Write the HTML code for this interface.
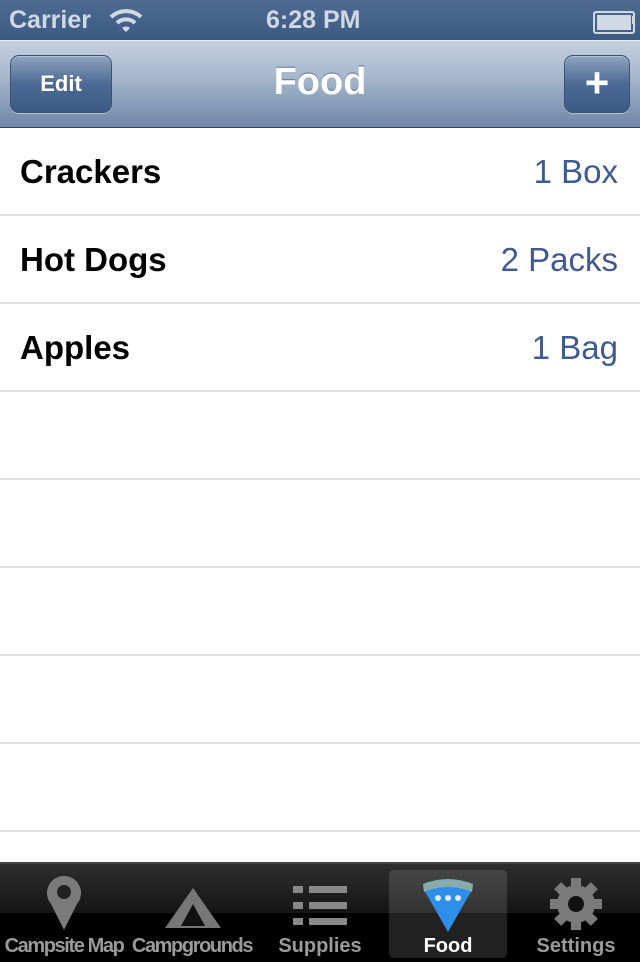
<!DOCTYPE html>
<html><head><style>
body{margin:0;width:640px;height:960px;overflow:hidden;font-family:"Liberation Sans",sans-serif;background:#fff;position:relative}
.sb{position:absolute;top:0;left:0;width:640px;height:40px;background:linear-gradient(#4f6b92,#3b5a82);color:#d0d8e4;font-weight:bold;font-size:25px}
.nav{position:absolute;top:40px;left:0;width:640px;height:88px;background:linear-gradient(#c3d0df,#a8b8cd 40%,#6d87a8 100%);border-top:1px solid #e6ecf3;border-bottom:1px solid #2d3f5a;box-sizing:border-box}
.btn{position:absolute;top:14px;height:58px;border-radius:9px;border:1px solid #3a5276;background:linear-gradient(#8ea3bf,#4c6a93 50%,#3c5b85);box-shadow:inset 0 1px 0 rgba(255,255,255,.35),0 1px 0 rgba(255,255,255,.4);color:#fff;font-weight:bold;text-align:center;box-sizing:border-box}
.title{position:absolute;left:0;width:640px;top:20px;text-align:center;color:#fff;font-weight:bold;font-size:38px;text-shadow:0 -1px 0 #5a6f8e}
.row{position:absolute;left:0;width:640px;height:88px;border-bottom:2px solid #e0e0e0;box-sizing:border-box}
.row b{position:absolute;left:20px;top:25px;font-size:33px;color:#000}
.row span{position:absolute;right:22px;top:25px;font-size:33px;color:#3e5a8e}
.tb{position:absolute;top:862px;left:0;width:640px;height:98px;background:linear-gradient(#2e2e2e,#151515 50%,#000 50%);border-top:2px solid #444}
.t{position:absolute;bottom:4px;font-size:20px;font-weight:bold;color:#9a9a9a;text-align:center;width:128px;letter-spacing:-1.4px}
</style></head><body>
<div class="sb"><span style="position:absolute;left:9px;top:6px">Carrier</span>
<svg style="position:absolute;left:109px;top:8px" width="34" height="24" viewBox="0 0 34 24"><path d="M2 9A22 22 0 0 1 32 9" stroke="#d0d8e4" stroke-width="4" fill="none"/><path d="M8 15A13 13 0 0 1 26 15" stroke="#d0d8e4" stroke-width="4" fill="none"/><path d="M13 20L17 24L21 20A6 6 0 0 0 13 20Z" fill="#d0d8e4"/></svg>
<span style="position:absolute;left:266px;top:6px">6:28 PM</span>
<div style="position:absolute;left:593px;top:11px;width:34px;height:15px;border:2px solid #d0d8e4;border-radius:3px;padding:2px;box-sizing:content-box"><div style="width:100%;height:100%;background:#d0d8e4"></div></div>
<div style="position:absolute;left:632px;top:16px;width:3px;height:8px;background:#d0d8e4"></div></div>
<div class="nav">
<div class="btn" style="left:10px;width:102px;font-size:22px;line-height:56px">Edit</div>
<div class="title">Food</div>
<div class="btn" style="left:564px;width:66px;font-size:42px;line-height:54px">+</div>
</div>
<div class="row" style="top:128px"><b>Crackers</b><span>1 Box</span></div>
<div class="row" style="top:216px"><b>Hot Dogs</b><span>2 Packs</span></div>
<div class="row" style="top:304px"><b>Apples</b><span>1 Bag</span></div>
<div class="row" style="top:392px"></div><div class="row" style="top:480px"></div><div class="row" style="top:568px"></div><div class="row" style="top:656px"></div><div class="row" style="top:744px"></div>
<div class="tb">
<div style="position:absolute;left:389px;top:6px;width:118px;height:88px;background:rgba(255,255,255,.13);border-radius:5px"></div>
<svg style="position:absolute;left:44px;top:10px" width="40" height="58" viewBox="0 0 40 58"><path d="M20 2A17 17 0 0 1 33 30L20 56L7 30A17 17 0 0 1 20 2Z" fill="#7a7a7a"/><circle cx="20" cy="18" r="7" fill="#222"/></svg>
<svg style="position:absolute;left:163px;top:22px" width="60" height="44" viewBox="0 0 60 44"><path d="M30 2L58 42H2Z" fill="#777"/><path d="M30 18L42 40H18Z" fill="#111"/></svg>
<svg style="position:absolute;left:293px;top:22px" width="54" height="40"><g fill="#888"><rect x="0" y="0" width="10" height="7"/><rect x="16" y="0" width="38" height="7"/><rect x="0" y="16" width="10" height="7"/><rect x="16" y="16" width="38" height="7"/><rect x="0" y="32" width="10" height="7"/><rect x="16" y="32" width="38" height="7"/></g></svg>
<svg style="position:absolute;left:421px;top:12px" width="54" height="56" viewBox="0 0 54 56"><path d="M2 12Q27 0 52 12L27 56Z" fill="#2d8fe8"/><path d="M2 8Q27 -2 52 8L51 16Q27 6 3 16Z" fill="#8aa"/><circle cx="17" cy="22" r="3" fill="#def"/><circle cx="27" cy="22" r="3" fill="#def"/><circle cx="37" cy="22" r="3" fill="#def"/></svg>
<svg style="position:absolute;left:550px;top:14px" width="52" height="52" viewBox="0 0 52 52"><g fill="#7a7a7a"><circle cx="26" cy="26" r="19"/><rect x="21" y="0" width="10" height="52"/><rect x="0" y="21" width="52" height="10"/><rect x="21" y="0" width="10" height="52" transform="rotate(45 26 26)"/><rect x="21" y="0" width="10" height="52" transform="rotate(-45 26 26)"/></g><circle cx="26" cy="26" r="8" fill="#111"/></svg>
<div class="t" style="left:0">Campsite Map</div>
<div class="t" style="left:128px">Campgrounds</div>
<div class="t" style="left:256px;letter-spacing:0">Supplies</div>
<div class="t" style="left:384px;color:#fff;letter-spacing:0">Food</div>
<div class="t" style="left:512px;letter-spacing:0">Settings</div>
</div>
</body></html>
